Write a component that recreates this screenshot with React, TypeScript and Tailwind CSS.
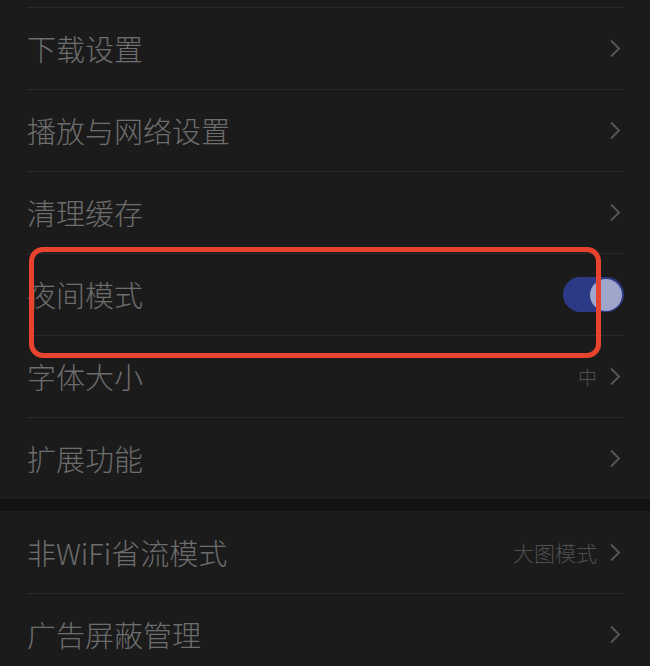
import React from "react";

const FONT = { fontFamily: '"Noto Sans CJK SC", "Noto Sans", sans-serif' };

function Chevron() {
  return (
    <svg width="12" height="19" viewBox="0 0 12 19" className="shrink-0">
      <path d="M2 1.5 L10 9.5 L2 17.5" fill="none" stroke="#555555" strokeWidth="2" />
    </svg>
  );
}

function Row({ label, value, toggle, first }: { label: string; value?: string; toggle?: boolean; first?: boolean }) {
  return (
    <div className={"ml-[27px] mr-[26px] h-[82px] flex items-center justify-between " + (first ? "" : "border-t border-[#2a2a2a]")}>
      <span className="text-[29px] font-light text-[#6d6d6d] leading-none">{label}</span>
      {toggle ? (
        <div className="w-[61px] h-[35px] rounded-full bg-[#2c3a85] flex items-center justify-end pr-[2px]">
          <div className="w-[32px] h-[32px] rounded-full bg-[#9fa5cb]" />
        </div>
      ) : (
        <div className="flex items-center gap-[12px] pr-[3px]">
          {value && <span className={(value.length > 1 ? "text-[21px]" : "text-[19px]") + " font-light text-[#4f4f4f] leading-none"}>{value}</span>}
          <Chevron />
        </div>
      )}
    </div>
  );
}

export default function App() {
  return (
    <div className="relative w-[650px] h-[666px] overflow-hidden bg-[#1b1b1b]" style={FONT}>
      <div className="h-[7px]" />
      <div>
        <Row label="下载设置" />
        <Row label="播放与网络设置" />
        <Row label="清理缓存" />
        <Row label="夜间模式" toggle />
        <Row label="字体大小" value="中" />
        <Row label="扩展功能" />
      </div>
      <div className="h-[12px] bg-[#121212]" />
      <div>
        <Row label="非WiFi省流模式" value="大图模式" first />
        <Row label="广告屏蔽管理" />
      </div>
      {/* annotation */}
      <div className="absolute left-[29px] top-[247px] w-[572px] h-[111px] border-[5px] border-[#e8432f] rounded-[14px]" />
    </div>
  );
}
